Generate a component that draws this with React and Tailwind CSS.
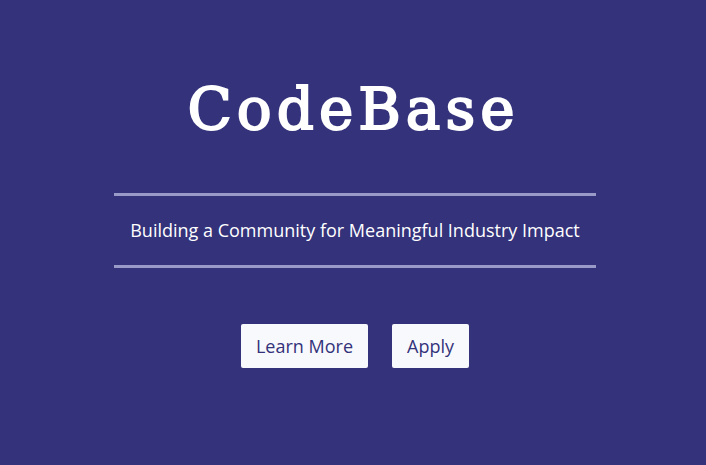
export default function App() {
  return (
    <div className="w-[706px] h-[465px] bg-[#33327a] flex flex-col items-center overflow-hidden pl-[4px] pt-[1px]">
      <h1 className="mt-[79px] mr-[8px] text-white text-[58px] leading-none tracking-[5px] pl-[5px] [-webkit-text-stroke:2px_white]" style={{ fontFamily: '"DejaVu Serif", serif' }}>
        CodeBase
      </h1>
      <div className="mt-[55px] w-[482px] h-[3px] bg-[#9a9ac8]" />
      <p className="h-[69px] flex items-center text-white text-[18px]" style={{ fontFamily: '"Open Sans", sans-serif' }}>
        Building a Community for Meaningful Industry Impact
      </p>
      <div className="w-[482px] h-[3px] bg-[#9a9ac8]" />
      <div className="mt-[56px] flex gap-[24px]" style={{ fontFamily: '"Open Sans", sans-serif' }}>
        <button className="w-[127px] h-[44px] bg-[#f8f9fc] text-[#33327a] text-[18px] rounded-[2px]">Learn More</button>
        <button className="w-[77px] h-[44px] bg-[#f8f9fc] text-[#33327a] text-[18px] rounded-[2px]">Apply</button>
      </div>
    </div>
  );
}
